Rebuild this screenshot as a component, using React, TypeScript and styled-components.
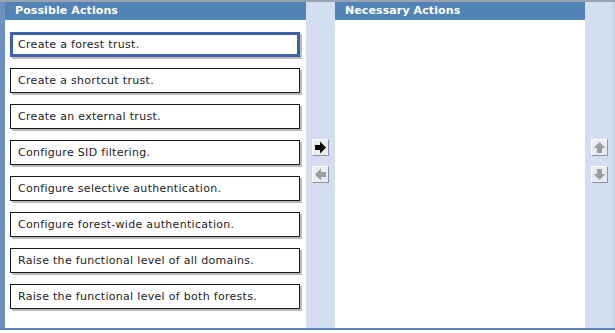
import React from "react";
import styled, { createGlobalStyle } from "styled-components";

const Global = createGlobalStyle`
  html, body { margin: 0; padding: 0; background: #ffffff; }
  body { font-family: "DejaVu Sans", Verdana, sans-serif; }
`;

const Frame = styled.div`
  width: 615px;
  height: 333px;
  display: flex;
  flex-direction: column;
  background: #ffffff;
  overflow: hidden;
`;

const TopLine = styled.div`
  height: 2px;
  background: #9aa4b0;
`;

const Body = styled.div`
  display: flex;
  height: 326px;
  border-left: 5px solid #6d92c2;
  box-shadow: inset 1px 0 0 #a9b3bf;
`;

const Panel = styled.div<{ $w: number }>`
  width: ${(p) => p.$w}px;
  display: flex;
  flex-direction: column;
  background: #ffffff;
`;

const Header = styled.div`
  height: 18px;
  background: #5283b6;
  color: #ffffff;
  font-weight: bold;
  font-size: 11px;
  line-height: 18px;
  padding-left: 10px;
  letter-spacing: 0.1px;
`;

const Strip = styled.div<{ $w: number }>`
  width: ${(p) => p.$w}px;
  background: #d3dff0;
  display: flex;
  flex-direction: column;
  align-items: center;
  padding-top: 137px;
  gap: 10px;
  box-sizing: border-box;
`;

const List = styled.div`
  display: flex;
  flex-direction: column;
  gap: 11px;
  padding: 12px 0 0 5px;
`;

const Item = styled.div<{ $focus?: boolean }>`
  box-sizing: border-box;
  width: 290px;
  height: 25px;
  border: ${(p) => (p.$focus ? "3px solid #3f62a6" : "1px solid #1a1a1a")};
  box-shadow: 2px 2px 0 #b9bcc2;
  background: #ffffff;
  font-size: 11px;
  letter-spacing: 0.3px;
  color: #222222;
  display: flex;
  align-items: center;
  padding-left: ${(p) => (p.$focus ? 5 : 7)}px;
`;

const ArrowBtn = styled.div`
  width: 17px;
  height: 17px;
  box-sizing: border-box;
  background: #e9ecf0;
  border-top: 1px solid #ffffff;
  border-left: 1px solid #ffffff;
  border-right: 1px solid #8d949c;
  border-bottom: 1px solid #8d949c;
  display: flex;
  align-items: center;
  justify-content: center;
`;

const RightEdge = styled.div`
  width: 2px;
  background: #c5d2e6;
`;

const BottomLine = styled.div`
  height: 2px;
  background: #5a86bd;
`;

const Arrow = ({ dir, color }: { dir: "r" | "l" | "u" | "d"; color: string }) => {
  const rot = { r: 0, l: 180, u: 270, d: 90 }[dir];
  return (
    <svg width="13" height="13" viewBox="0 0 13 13">
      <g transform={`rotate(${rot} 6.5 6.5)`}>
        <path d="M1 4 H6 V0.5 L12 6.5 L6 12.5 V9 H1 Z" fill={color} />
      </g>
    </svg>
  );
};

const items = [
  "Create a forest trust.",
  "Create a shortcut trust.",
  "Create an external trust.",
  "Configure SID filtering.",
  "Configure selective authentication.",
  "Configure forest-wide authentication.",
  "Raise the functional level of all domains.",
  "Raise the functional level of both forests.",
];

export default function App() {
  return (
    <Frame>
      <Global />
      <TopLine />
      <Body>
        <Panel $w={301}>
          <Header>Possible Actions</Header>
          <List>
            {items.map((t, i) => (
              <Item key={t} $focus={i === 0}>
                {t}
              </Item>
            ))}
          </List>
        </Panel>
        <Strip $w={29}>
          <ArrowBtn>
            <Arrow dir="r" color="#000000" />
          </ArrowBtn>
          <ArrowBtn>
            <Arrow dir="l" color="#9a9ea4" />
          </ArrowBtn>
        </Strip>
        <Panel $w={250}>
          <Header>Necessary Actions</Header>
        </Panel>
        <Strip $w={28}>
          <ArrowBtn>
            <Arrow dir="u" color="#9a9ea4" />
          </ArrowBtn>
          <ArrowBtn>
            <Arrow dir="d" color="#9a9ea4" />
          </ArrowBtn>
        </Strip>
        <RightEdge />
      </Body>
      <BottomLine />
    </Frame>
  );
}
